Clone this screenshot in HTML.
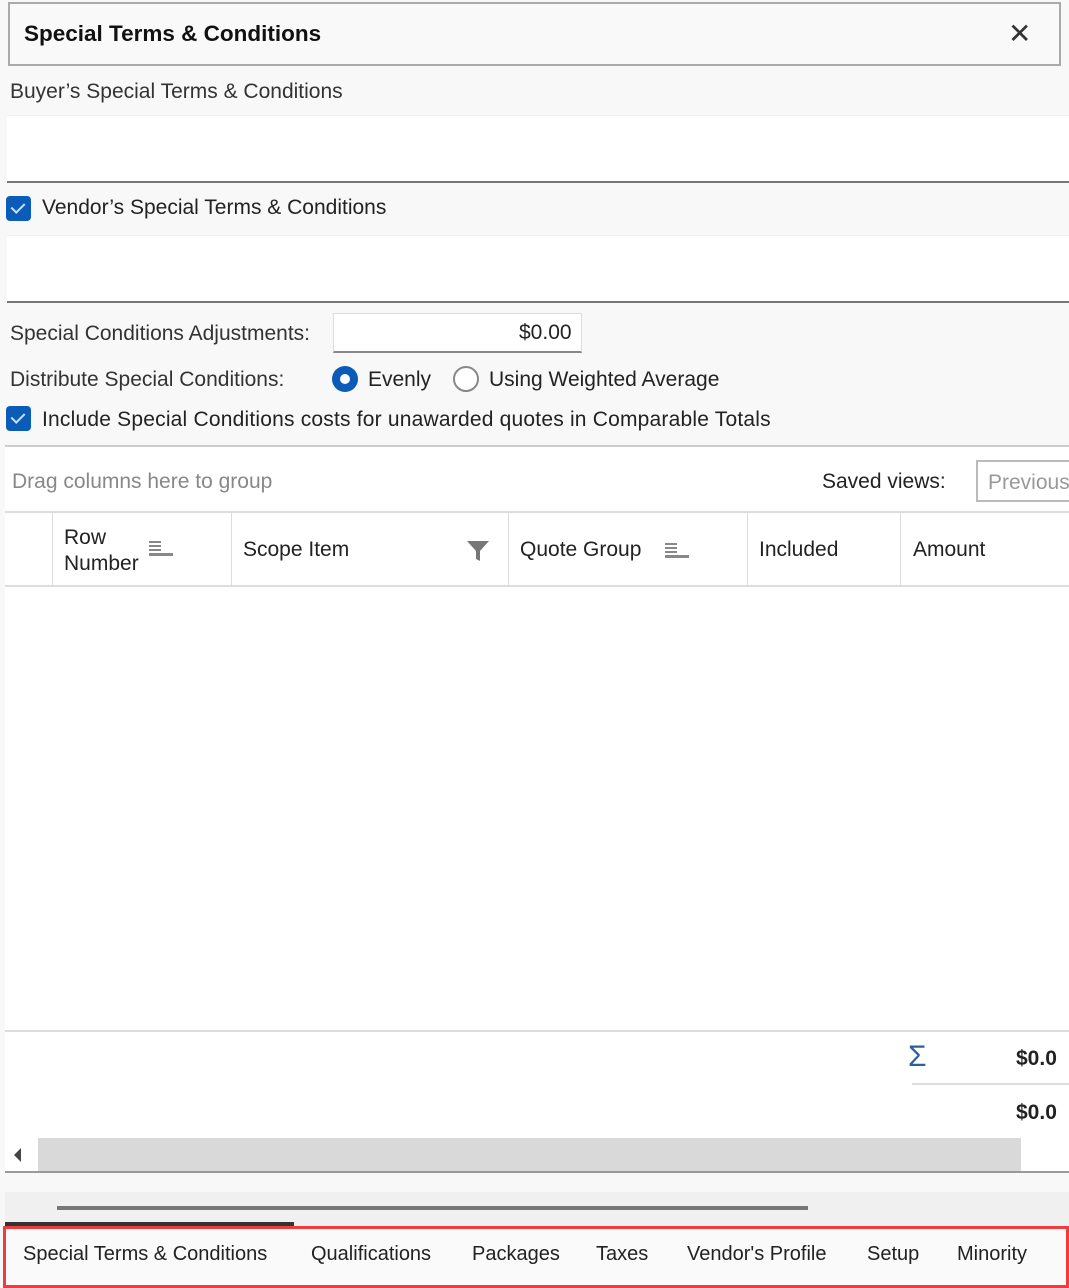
<!DOCTYPE html>
<html><head><style>
*{box-sizing:border-box;margin:0;padding:0}
body{width:1069px;height:1288px;background:#f8f8f8;font-family:"Liberation Sans",sans-serif;color:#222;position:relative;overflow:hidden;font-size:21px}
.a{position:absolute;white-space:nowrap}
.cb{position:absolute;width:25px;height:25px;background:#0a5cb8;border-radius:4px}
.cb:after{content:"";position:absolute;left:8px;top:4px;width:6px;height:11px;border:solid #cfe0f5;border-width:0 2px 2px 0;transform:rotate(45deg)}
.txt{position:absolute;background:#fff;border-bottom:2px solid #777;border-top:1px solid #eee}
.hd{position:absolute;top:513px;height:72px;border-left:1px solid #ddd}
</style></head><body>
<div class="a" style="left:8px;top:2px;width:1053px;height:64px;border:2px solid #aaa;background:#f9f9f9"></div>
<div class="a" style="left:24px;top:21px;font-weight:bold;font-size:22.5px;color:#111">Special Terms &amp; Conditions</div>
<div class="a" style="left:1008px;top:17px;font-size:28px;color:#333">✕</div>
<div class="a" style="left:10px;top:80px;color:#333">Buyer’s Special Terms &amp; Conditions</div>
<div class="txt" style="left:7px;top:115px;width:1062px;height:68px"></div>
<div class="cb" style="left:6px;top:196px"></div>
<div class="a" style="left:42px;top:196px">Vendor’s Special Terms &amp; Conditions</div>
<div class="txt" style="left:7px;top:235px;width:1062px;height:68px"></div>
<div class="a" style="left:10px;top:322px;color:#333">Special Conditions Adjustments:</div>
<div class="txt" style="left:333px;top:313px;width:249px;height:40px;border:1px solid #ddd;border-bottom:2px solid #888"></div>
<div class="a" style="left:519px;top:321px">$0.00</div>
<div class="a" style="left:10px;top:368px;color:#333">Distribute Special Conditions:</div>
<div class="a" style="left:332px;top:366px;width:26px;height:26px;border-radius:50%;background:#0a5cb8"></div>
<div class="a" style="left:340px;top:374px;width:10px;height:10px;border-radius:50%;background:#fff"></div>
<div class="a" style="left:368px;top:368px">Evenly</div>
<div class="a" style="left:453px;top:366px;width:26px;height:26px;border-radius:50%;border:2px solid #888;background:#fff"></div>
<div class="a" style="left:489px;top:368px">Using Weighted Average</div>
<div class="cb" style="left:6px;top:406px"></div>
<div class="a" style="left:42px;top:408px;letter-spacing:0.2px">Include Special Conditions costs for unawarded quotes in Comparable Totals</div>
<div class="a" style="left:5px;top:445px;width:1064px;height:692px;background:#fff;border-top:2px solid #ccc"></div>
<div class="a" style="left:12px;top:470px;color:#888">Drag columns here to group</div>
<div class="a" style="left:822px;top:470px">Saved views:</div>
<div class="a" style="left:976px;top:460px;width:100px;height:42px;border:2px solid #bbb;background:#fff;overflow:hidden;padding:9px 0 0 10px;color:#999">Previous</div>
<div class="a" style="left:5px;top:511px;width:1064px;height:2px;background:#ddd"></div>
<div class="hd" style="left:52px;width:180px"></div>
<div class="hd" style="left:231px;width:277px"></div>
<div class="hd" style="left:508px;width:240px"></div>
<div class="hd" style="left:747px;width:154px"></div>
<div class="hd" style="left:900px;width:169px"></div>
<div class="a" style="left:5px;top:585px;width:1064px;height:2px;background:#ddd"></div>
<div class="a" style="left:64px;top:525px;line-height:26px">Row<br>Number</div>
<div class="a" style="left:149px;top:541px;width:12px;height:2px;background:#888;box-shadow:0 4px 0 #888,0 8px 0 #888"></div><div class="a" style="left:149px;top:553px;width:24px;height:3px;background:#888"></div>
<div class="a" style="left:243px;top:538px">Scope Item</div>
<svg class="a" style="left:466px;top:540px" width="24" height="22"><path d="M1 1H23L14 11V21L10 19V11Z" fill="#777"/></svg>
<div class="a" style="left:520px;top:538px">Quote Group</div>
<div class="a" style="left:665px;top:543px;width:12px;height:2px;background:#888;box-shadow:0 4px 0 #888,0 8px 0 #888"></div><div class="a" style="left:665px;top:555px;width:24px;height:3px;background:#888"></div>
<div class="a" style="left:759px;top:538px">Included</div>
<div class="a" style="left:913px;top:538px">Amount</div>
<div class="a" style="left:5px;top:1030px;width:1064px;height:2px;background:#ddd"></div>
<div class="a" style="left:908px;top:1040px;font-size:30px;color:#2a5fa0">Σ</div>
<div class="a" style="left:1016px;top:1047px;font-weight:bold">$0.0</div>
<div class="a" style="left:912px;top:1083px;width:157px;height:2px;background:#ddd"></div>
<div class="a" style="left:1016px;top:1101px;font-weight:bold">$0.0</div>
<div class="a" style="left:5px;top:1137px;width:1064px;height:36px;background:#fff;border-bottom:2px solid #999"></div>
<div class="a" style="left:38px;top:1138px;width:983px;height:33px;background:#d9d9d9"></div>
<div class="a" style="left:14px;top:1148px;width:0;height:0;border:7px solid transparent;border-right-color:#444;border-left:0"></div>
<div class="a" style="left:5px;top:1192px;width:1064px;height:34px;background:#f0f0f0"></div>
<div class="a" style="left:57px;top:1206px;width:751px;height:4px;background:#777"></div>
<div class="a" style="left:5px;top:1222px;width:289px;height:4px;background:#333"></div>
<div class="a" style="left:3px;top:1226px;width:1066px;height:62px;border:3px solid #f03c3c;background:#fafafa"></div>
<div class="a" style="left:23px;top:1243px;font-size:20px;color:#222">Special Terms &amp; Conditions</div>
<div class="a" style="left:311px;top:1243px;font-size:20px">Qualifications</div>
<div class="a" style="left:472px;top:1243px;font-size:20px">Packages</div>
<div class="a" style="left:596px;top:1243px;font-size:20px">Taxes</div>
<div class="a" style="left:687px;top:1243px;font-size:20px">Vendor's Profile</div>
<div class="a" style="left:867px;top:1243px;font-size:20px">Setup</div>
<div class="a" style="left:957px;top:1243px;font-size:20px">Minority</div>
</body></html>
